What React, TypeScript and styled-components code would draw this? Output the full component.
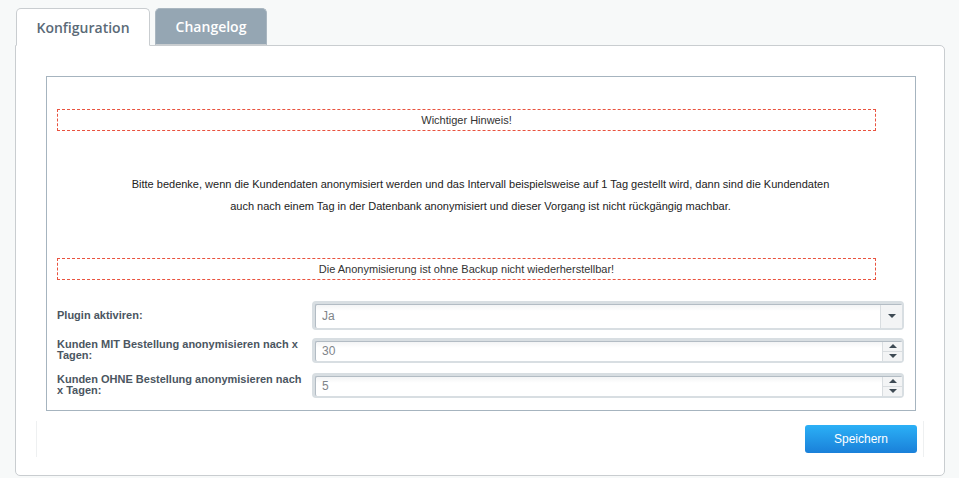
import React from "react";
import styled, { createGlobalStyle } from "styled-components";

const GlobalStyle = createGlobalStyle`
  html, body {
    margin: 0;
    padding: 0;
    background: #f7f9f9;
  }
  * {
    box-sizing: border-box;
  }
`;

const Page = styled.div`
  padding: 8px 14px 2px 15px;
  font-family: "Liberation Sans", Arial, sans-serif;
`;

const TabBar = styled.div`
  display: flex;
  gap: 5px;
  padding-left: 1px;
  position: relative;
  z-index: 1;
  margin-bottom: -1px;
`;

const Tab = styled.div<{ $active?: boolean }>`
  padding: 0 20px;
  display: flex;
  align-items: center;
  justify-content: center;
  font-family: "Open Sans", sans-serif;
  font-weight: 600;
  font-size: 14px;
  border-radius: 5px 5px 0 0;
  border: 1px solid ${(p) => (p.$active ? "#c9cdd0" : "#a9b6c0")};
  border-bottom: ${(p) => (p.$active ? "1px solid #fff" : "1px solid #c9cdd0")};
  background: ${(p) => (p.$active ? "#fff" : "#95a6b3")};
  color: ${(p) => (p.$active ? "#5b6a77" : "#fff")};
  width: ${(p) => (p.$active ? "134px" : "112px")};
  height: ${(p) => (p.$active ? "38px" : "37px")};
  align-self: flex-start;
`;

const Panel = styled.div`
  background: #fff;
  border: 1px solid #c9cdd0;
  border-radius: 0 5px 5px 5px;
  padding: 30px 28px 22px 30px;
  height: 431px;
`;

const InnerBox = styled.div`
  border: 1px solid #a6b4bf;
  padding: 32px 11px 10px 10px;
`;

const Notice = styled.div`
  border: 1px dashed #e9533f;
  margin-right: 28px;
  height: 22px;
  display: flex;
  align-items: center;
  justify-content: center;
  font-size: 11px;
  color: #333;
`;

const Paragraph = styled.p`
  margin: 42px 0 41px;
  text-align: center;
  font-size: 11px;
  line-height: 22px;
  color: #222;
`;

const Form = styled.div`
  margin-top: 20px;
  display: flex;
  flex-direction: column;
  gap: 5px;
`;

const Row = styled.div`
  display: flex;
  align-items: center;
  min-height: 30px;
`;

const Label = styled.label`
  width: 255px;
  flex-shrink: 0;
  padding-right: 8px;
  font-size: 11px;
  line-height: 11px;
  font-weight: bold;
  color: #4b5661;
`;

const Ring = styled.div`
  flex: 1;
  padding: 3px 2px 2px 3px;
  background: #d8dee2;
  border-radius: 4px;
`;

const Field = styled.div<{ $h: number }>`
  height: ${(p) => p.$h}px;
  background: linear-gradient(#f3f4f5, #fff 6px);
  border-top: 1px solid #b3bcc4;
  border-left: 1px solid #b3bcc4;
  border-radius: 2px;
  display: flex;
  align-items: center;
  font-size: 12px;
  color: #80858a;
`;

const Value = styled.span`
  flex: 1;
  padding-left: 6px;
`;

const SelectArrow = styled.div`
  width: 22px;
  align-self: stretch;
  border-left: 1px solid #d9dde0;
  background: #f3f4f5;
  display: flex;
  align-items: center;
  justify-content: center;
`;

const Spinner = styled.div`
  width: 20px;
  align-self: stretch;
  display: flex;
  flex-direction: column;
  border-left: 1px solid #d9dde0;
`;

const SpinBtn = styled.div<{ $up?: boolean }>`
  flex: 1;
  background: #f3f4f5;
  display: flex;
  align-items: center;
  justify-content: center;
  border-bottom: ${(p) => (p.$up ? "1px solid #d9dde0" : "none")};
`;

const Triangle = styled.span<{ $up?: boolean }>`
  width: 0;
  height: 0;
  border-left: 4px solid transparent;
  border-right: 4px solid transparent;
  ${(p) =>
    p.$up
      ? "border-bottom: 4px solid #3e4a54;"
      : "border-top: 4px solid #3e4a54;"}
`;

const Footer = styled.div`
  margin: 10px -8px 0 -10px;
  padding: 4px 6px;
  border-left: 1px solid #eef0f1;
  border-right: 1px solid #eef0f1;
  display: flex;
  justify-content: flex-end;
`;

const SaveButton = styled.button`
  width: 112px;
  height: 28px;
  border: none;
  border-radius: 3px;
  background: linear-gradient(#2bb0f6, #1a80d9);
  color: #fff;
  font-family: "Liberation Sans", Arial, sans-serif;
  font-size: 12px;
  cursor: pointer;
`;

function NumberField({ value }: { value: string }) {
  return (
    <Ring>
      <Field $h={20}>
        <Value>{value}</Value>
        <Spinner>
          <SpinBtn $up>
            <Triangle $up />
          </SpinBtn>
          <SpinBtn>
            <Triangle />
          </SpinBtn>
        </Spinner>
      </Field>
    </Ring>
  );
}

export default function App() {
  return (
    <Page>
      <GlobalStyle />
      <TabBar>
        <Tab $active>Konfiguration</Tab>
        <Tab>Changelog</Tab>
      </TabBar>
      <Panel>
        <InnerBox>
          <Notice>Wichtiger Hinweis!</Notice>
          <Paragraph>
            Bitte bedenke, wenn die Kundendaten anonymisiert werden und das
            Intervall beispielsweise auf 1 Tag gestellt wird, dann sind die
            Kundendaten
            <br />
            auch nach einem Tag in der Datenbank anonymisiert und dieser
            Vorgang ist nicht rückgängig machbar.
          </Paragraph>
          <Notice>Die Anonymisierung ist ohne Backup nicht wiederherstellbar!</Notice>
          <Form>
            <Row>
              <Label>Plugin aktiviren:</Label>
              <Ring>
                <Field $h={24}>
                  <Value>Ja</Value>
                  <SelectArrow>
                    <Triangle />
                  </SelectArrow>
                </Field>
              </Ring>
            </Row>
            <Row>
              <Label>Kunden MIT Bestellung anonymisieren nach x Tagen:</Label>
              <NumberField value="30" />
            </Row>
            <Row>
              <Label>Kunden OHNE Bestellung anonymisieren nach x Tagen:</Label>
              <NumberField value="5" />
            </Row>
          </Form>
        </InnerBox>
        <Footer>
          <SaveButton>Speichern</SaveButton>
        </Footer>
      </Panel>
    </Page>
  );
}
